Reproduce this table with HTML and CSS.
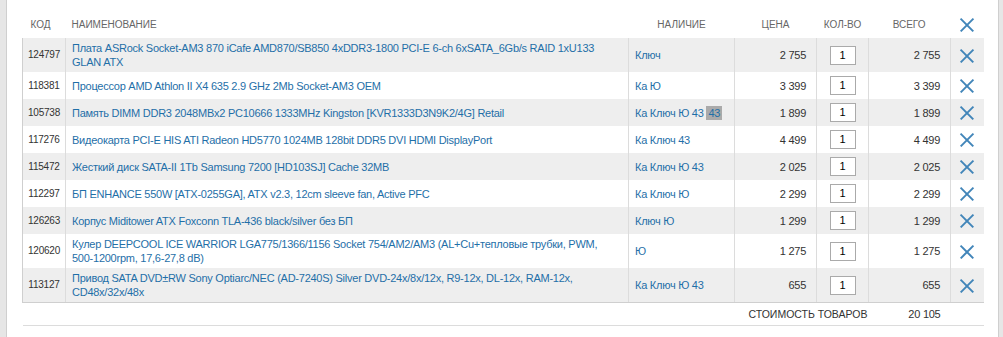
FILE: index.html
```html
<!DOCTYPE html>
<html lang="ru">
<head>
<meta charset="utf-8">
<link rel="stylesheet" href="styles.css">
</head>
<body>
<div class="page">
  <div class="side side-left"></div>
  <main class="main">
    <table class="cart">
      <colgroup>
        <col class="c-code"><col class="c-name"><col class="c-avail"><col class="c-price"><col class="c-qty"><col class="c-sum"><col class="c-del">
      </colgroup>
      <thead>
        <tr>
          <th class="t-code">КОД</th>
          <th class="t-name">НАИМЕНОВАНИЕ</th>
          <th class="t-avail">НАЛИЧИЕ</th>
          <th class="t-price">ЦЕНА</th>
          <th class="t-qty">КОЛ-ВО</th>
          <th class="t-sum">ВСЕГО</th>
          <th class="t-del"><span class="x"></span></th>
        </tr>
      </thead>
      <tbody>
        <tr class="odd"><td class="code">124797</td><td class="name"><a>Плата ASRock Socket-AM3 870 iCafe AMD870/SB850 4xDDR3-1800 PCI-E 6-ch 6xSATA_6Gb/s RAID 1xU133 GLAN ATX</a></td><td class="avail"><a>Ключ</a></td><td class="num">2 755</td><td class="qty"><span class="box">1</span></td><td class="num">2 755</td><td class="del"><span class="x"></span></td></tr>
        <tr><td class="code">118381</td><td class="name"><a>Процессор AMD Athlon II X4 635 2.9 GHz 2Mb Socket-AM3 OEM</a></td><td class="avail"><a>Ка Ю</a></td><td class="num">3 399</td><td class="qty"><span class="box">1</span></td><td class="num">3 399</td><td class="del"><span class="x"></span></td></tr>
        <tr class="odd"><td class="code">105738</td><td class="name"><a>Память DIMM DDR3 2048MBx2 PC10666 1333MHz Kingston [KVR1333D3N9K2/4G] Retail</a></td><td class="avail"><a>Ка Ключ Ю 43 <span class="hl">43</span></a></td><td class="num">1 899</td><td class="qty"><span class="box">1</span></td><td class="num">1 899</td><td class="del"><span class="x"></span></td></tr>
        <tr><td class="code">117276</td><td class="name"><a>Видеокарта PCI-E HIS ATI Radeon HD5770 1024MB 128bit DDR5 DVI HDMI DisplayPort</a></td><td class="avail"><a>Ка Ключ 43</a></td><td class="num">4 499</td><td class="qty"><span class="box">1</span></td><td class="num">4 499</td><td class="del"><span class="x"></span></td></tr>
        <tr class="odd"><td class="code">115472</td><td class="name"><a>Жесткий диск SATA-II 1Tb Samsung 7200 [HD103SJ] Cache 32MB</a></td><td class="avail"><a>Ка Ключ Ю 43</a></td><td class="num">2 025</td><td class="qty"><span class="box">1</span></td><td class="num">2 025</td><td class="del"><span class="x"></span></td></tr>
        <tr><td class="code">112297</td><td class="name"><a>БП ENHANCE 550W [ATX-0255GA], ATX v2.3, 12cm sleeve fan, Active PFC</a></td><td class="avail"><a>Ка Ключ Ю</a></td><td class="num">2 299</td><td class="qty"><span class="box">1</span></td><td class="num">2 299</td><td class="del"><span class="x"></span></td></tr>
        <tr class="odd"><td class="code">126263</td><td class="name"><a>Корпус Miditower ATX Foxconn TLA-436 black/silver без БП</a></td><td class="avail"><a>Ключ Ю</a></td><td class="num">1 299</td><td class="qty"><span class="box">1</span></td><td class="num">1 299</td><td class="del"><span class="x"></span></td></tr>
        <tr><td class="code">120620</td><td class="name"><a>Кулер DEEPCOOL ICE WARRIOR LGA775/1366/1156 Socket 754/AM2/AM3 (AL+Cu+тепловые трубки, PWM, <span class="nw">500-1200rpm,</span> 17,6-27,8 dB)</a></td><td class="avail"><a>Ю</a></td><td class="num">1 275</td><td class="qty"><span class="box">1</span></td><td class="num">1 275</td><td class="del"><span class="x"></span></td></tr>
        <tr class="odd last"><td class="code">113127</td><td class="name"><a>Привод SATA DVD±RW Sony Optiarc/NEC (AD-7240S) Silver DVD-24x/8x/12x, R9-12x, DL-12x, RAM-12x, CD48x/32x/48x</a></td><td class="avail"><a>Ка Ключ Ю 43</a></td><td class="num">655</td><td class="qty"><span class="box">1</span></td><td class="num">655</td><td class="del"><span class="x"></span></td></tr>
      </tbody>
      <tfoot>
        <tr><td colspan="3"></td><td colspan="3" class="total-wrap"><span class="total-label">СТОИМОСТЬ ТОВАРОВ</span><span class="total-val">20 105</span></td><td></td></tr>
      </tfoot>
    </table>
  </main>
  <div class="side side-right"></div>
</div>
</body>
</html>
```
FILE: styles.css
```css
html, body { margin: 0; padding: 0; background: #fff; }
body { font-family: "Liberation Sans", Arial, sans-serif; font-size: 11px; letter-spacing: -0.25px; color: #333; }
.page { display: flex; height: 337px; overflow: hidden; }
.side { flex: none; background: #e6e6e6; }
.side-left { width: 6px; border-right: 1px solid #cfcfcf; }
.side-right { width: 5px; border-left: 1px solid #cfcfcf; }
.main { flex: 1; padding: 11px 14px 0 15px; }
.cart { width: 961px; border-collapse: collapse; table-layout: fixed; }
.c-code { width: 43px; } .c-name { width: 563px; } .c-avail { width: 106px; }
.c-price { width: 82px; } .c-qty { width: 52px; } .c-sum { width: 82px; } .c-del { width: 33px; }
thead tr { height: 27px; }
th { font-weight: normal; font-size: 10px; letter-spacing: 0; color: #666; padding: 0; text-align: left; vertical-align: middle; }
.t-code { padding-left: 8px; }
.t-name { padding-left: 6px; }
.t-avail { text-align: center; }
.t-price { text-align: right; padding-right: 27px; }
.t-qty { text-align: center; }
.t-sum { text-align: right; padding-right: 25px; }
.t-del { text-align: center; }
tbody tr { height: 27px; }
tbody td { border-left: 1px solid #dcdcdc; padding: 0; vertical-align: middle; line-height: 14px; }
tbody tr.odd td { background: #eeeeee; }
tbody tr td:first-child { border-left: 1px solid #cfcfcf; }
tbody tr.last td { border-bottom: 1px solid #cfcfcf; }
td.code { font-size: 10px; letter-spacing: -0.2px; color: #333; text-align: center; }
td.name { padding: 3px 6px; }
.nw { white-space: nowrap; }
td.avail { padding-left: 6px; }
a { color: #1f6fa8; text-decoration: none; }
.hl { background: #aaaaaa; color: #1f6fa8; padding: 1px 2px; }
td.num { text-align: right; padding-right: 10px; color: #333; }
td.qty { text-align: center; }
.box { display: inline-block; vertical-align: middle; box-sizing: border-box; width: 26px; height: 19px; border: 1px solid #aaa; background: #fff; line-height: 17px; text-align: center; color: #000; letter-spacing: 0; }
td.del { text-align: center; }
.x { display: inline-block; width: 14px; height: 14px; position: relative; vertical-align: middle; }
.x::before, .x::after { content: ""; position: absolute; left: -2px; top: 6px; width: 18px; height: 1.8px; background: #4185b9; transform: rotate(45deg); }
.x::after { transform: rotate(-45deg); }
tfoot tr { height: 23px; }
tfoot td { border-bottom: 1px solid #dcdcdc; padding: 0; vertical-align: middle; }
.total-wrap { text-align: right; padding-right: 10px; color: #333; }
.total-label { float: left; padding-left: 14px; font-size: 10.5px; letter-spacing: 0; }
```
